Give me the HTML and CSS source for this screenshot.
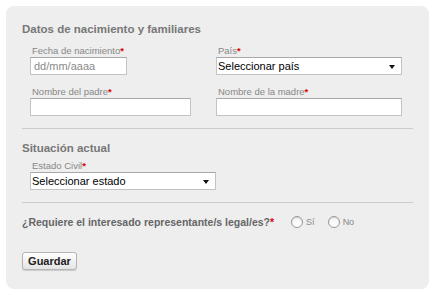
FILE: index.html
```html
<!DOCTYPE html>
<html lang="es">
<head>
  <meta charset="UTF-8">
  <title>Datos del interesado</title>
  <link rel="stylesheet" href="styles.css">
</head>
<body>
  <form class="panel">
    <h2 class="section-title">Datos de nacimiento y familiares</h2>
    <div class="fields">
      <div class="field">
        <label>Fecha de nacimiento<span class="req">*</span></label>
        <div class="input input-date placeholder">dd/mm/aaaa</div>
      </div>
      <div class="field">
        <label>País<span class="req">*</span></label>
        <div class="select select-wide">Seleccionar país</div>
      </div>
      <div class="field">
        <label>Nombre del padre<span class="req">*</span></label>
        <div class="input input-name"></div>
      </div>
      <div class="field">
        <label>Nombre de la madre<span class="req">*</span></label>
        <div class="input input-wide"></div>
      </div>
    </div>

    <hr class="divider">

    <h2 class="section-title">Situación actual</h2>
    <div class="fields fields-tight">
      <div class="field">
        <label>Estado Civil<span class="req">*</span></label>
        <div class="select select-wide">Seleccionar estado</div>
      </div>
    </div>

    <hr class="divider">

    <div class="question">
      <span class="question-text">¿Requiere el interesado representante/s legal/es?<span class="req">*</span></span>
      <span class="radio-option"><span class="radio"></span>Sí</span>
      <span class="radio-option"><span class="radio"></span>No</span>
    </div>

    <button type="button" class="btn">Guardar</button>
  </form>
</body>
</html>
```

FILE: styles.css
```css
body {
  margin: 0;
  background: #ffffff;
  font-family: "Liberation Sans", Arial, sans-serif;
}

.panel {
  margin: 6px;
  width: 391px;
  height: 267px;
  padding: 16px 16px 0 16px;
  background: #eeeeee;
  border-radius: 8px;
}

.section-title {
  margin: 0;
  font-size: 11.5px;
  line-height: 15px;
  font-weight: bold;
  color: #777777;
}

.fields {
  display: grid;
  grid-template-columns: 186px 186px;
  row-gap: 11px;
  padding-left: 8px;
  margin-top: 8px;
}

.fields-tight {
  margin-top: 4px;
}

.field label {
  display: block;
  margin-left: 2px;
  font-size: 9.5px;
  line-height: 12px;
  color: #888888;
}

.req {
  color: #e00000;
  font-weight: bold;
}

.input,
.select {
  box-sizing: border-box;
  height: 18px;
  background: #ffffff;
  border: 1px solid #c4c4c4;
  border-top-color: #a8a8a8;
  font-size: 11px;
  line-height: 16px;
  padding: 0 3px;
  color: #000000;
}

.placeholder {
  color: #8a8a8a;
}

.input-date { width: 97px; }
.input-name { width: 161px; }
.input-wide { width: 186px; }

.select {
  position: relative;
  width: 186px;
  padding-left: 1px;
}

.select::after {
  content: "";
  position: absolute;
  right: 6px;
  top: 7px;
  border-left: 3px solid transparent;
  border-right: 3px solid transparent;
  border-top: 4px solid #111111;
}

.divider {
  margin: 12px 0 0 0;
  border: none;
  border-top: 1px solid #cccccc;
  height: 0;
}

.divider + .section-title {
  margin-top: 12px;
}

.question {
  display: flex;
  align-items: center;
  margin-top: 11px;
  height: 16px;
}

.question-text {
  font-size: 10.5px;
  font-weight: bold;
  color: #666666;
}

.radio-option {
  display: flex;
  align-items: center;
  gap: 3px;
  font-size: 9px;
  color: #888888;
  margin-left: 17px;
}

.radio-option + .radio-option {
  margin-left: 13px;
}

.radio {
  box-sizing: border-box;
  width: 12px;
  height: 12px;
  border-radius: 50%;
  border: 1px solid #999999;
  background: linear-gradient(#f4f4f4, #ffffff);
  box-shadow: inset 0 1px 1px rgba(0, 0, 0, 0.15);
}

.btn {
  display: block;
  margin-top: 22px;
  height: 18px;
  width: 55px;
  padding: 0;
  font-family: "Liberation Sans", Arial, sans-serif;
  font-size: 11px;
  font-weight: bold;
  color: #222222;
  background: linear-gradient(#ffffff, #e4e4e4);
  border: 1px solid #b4b4b4;
  border-radius: 3px;
  box-shadow: 0 1px 1px rgba(0, 0, 0, 0.15);
}
```
